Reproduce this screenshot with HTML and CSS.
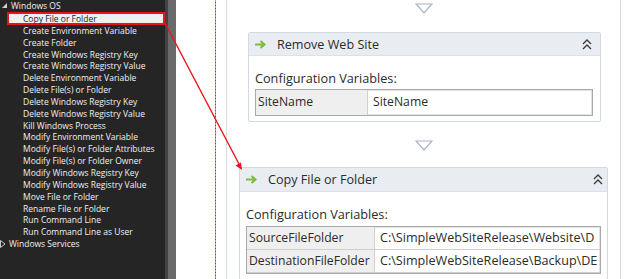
FILE: index.html
```html
<!DOCTYPE html>
<html lang="en">
<head>
  <meta charset="UTF-8">
  <title>Workflow designer</title>
  <link rel="stylesheet" href="styles.css">
</head>
<body>
  <div class="app">
    <aside class="toolbox">
      <div class="group">
        <svg class="twisty" width="6" height="6" viewBox="0 0 6 6"><path d="M5 0 L5 5 L0 5 Z" fill="#d0d0d0"/></svg>
        Windows OS
      </div>
      <ul class="items">
        <li class="selected">Copy File or Folder</li>
        <li>Create Environment Variable</li>
        <li>Create Folder</li>
        <li>Create Windows Registry Key</li>
        <li>Create Windows Registry Value</li>
        <li>Delete Environment Variable</li>
        <li>Delete File(s) or Folder</li>
        <li>Delete Windows Registry Key</li>
        <li>Delete Windows Registry Value</li>
        <li>Kill Windows Process</li>
        <li>Modify Environment Variable</li>
        <li>Modify File(s) or Folder Attributes</li>
        <li>Modify File(s) or Folder Owner</li>
        <li>Modify Windows Registry Key</li>
        <li>Modify Windows Registry Value</li>
        <li>Move File or Folder</li>
        <li>Rename File or Folder</li>
        <li>Run Command Line</li>
        <li>Run Command Line as User</li>
      </ul>
      <div class="group closed">
        <svg class="twisty" width="6" height="8" viewBox="0 0 6 8"><path d="M0.5 0.5 L5 4 L0.5 7.5 Z" fill="none" stroke="#c8c8c8"/></svg>
        Windows Services
      </div>
    </aside>
    <div class="scroll"></div>
    <main class="designer">
      <div class="guide"></div>
      <div class="sequence">
        <div class="drop">
          <svg width="18" height="11" viewBox="0 0 18 11"><path d="M1 1 L17 1 L9 10 Z" fill="none" stroke="#a9b4c2" stroke-width="1.2"/></svg>
        </div>
        <section class="activity first">
          <header class="activity-head">
            <svg class="go" width="11" height="9" viewBox="0 0 11 9"><path d="M0 4.5 H9 M5.5 1 L9.5 4.5 L5.5 8" fill="none" stroke="#7dbb3a" stroke-width="2"/></svg>
            <span class="title">Remove Web Site</span>
            <svg class="fold" width="10" height="11" viewBox="0 0 10 11"><path d="M1 5 L5 1 L9 5 M1 10 L5 6 L9 10" fill="none" stroke="#3a3a3a" stroke-width="1.3"/></svg>
          </header>
          <div class="activity-body">
            <div class="caption">Configuration Variables:</div>
            <div class="vars narrow">
              <div class="key">SiteName</div>
              <div class="val">SiteName</div>
            </div>
          </div>
        </section>
        <div class="drop">
          <svg width="18" height="11" viewBox="0 0 18 11"><path d="M1 1 L17 1 L9 10 Z" fill="none" stroke="#a9b4c2" stroke-width="1.2"/></svg>
        </div>
        <section class="activity second">
          <header class="activity-head">
            <svg class="go" width="11" height="9" viewBox="0 0 11 9"><path d="M0 4.5 H9 M5.5 1 L9.5 4.5 L5.5 8" fill="none" stroke="#7dbb3a" stroke-width="2"/></svg>
            <span class="title">Copy File or Folder</span>
            <svg class="fold" width="10" height="11" viewBox="0 0 10 11"><path d="M1 5 L5 1 L9 5 M1 10 L5 6 L9 10" fill="none" stroke="#3a3a3a" stroke-width="1.3"/></svg>
          </header>
          <div class="activity-body">
            <div class="caption">Configuration Variables:</div>
            <div class="vars wide">
              <div class="key">SourceFileFolder</div>
              <div class="val">C:\SimpleWebSiteRelease\Website\D</div>
              <div class="key">DestinationFileFolder</div>
              <div class="val">C:\SimpleWebSiteRelease\Backup\DE</div>
            </div>
          </div>
        </section>
      </div>
    </main>
  </div>

  <svg class="callout" width="624" height="279" viewBox="0 0 624 279">
    <line x1="165" y1="23" x2="239" y2="164" stroke="#e8141c" stroke-width="1.4"/>
    <path d="M242 170 L241 162.5 L235.5 165.5 Z" fill="#e8141c"/>
  </svg>
</body>
</html>
```

FILE: styles.css
```css
body {
  margin: 0;
  background: #fff;
  font-family: "Open Sans", "Noto Sans", sans-serif;
}
.app {
  display: flex;
  height: 279px;
  overflow: hidden;
}
.toolbox {
  width: 165px;
  background: #252526;
  color: #f0f0f0;
  font-size: 8.5px;
}
.group {
  display: flex;
  align-items: center;
  height: 11.85px;
  line-height: 11.85px;
  padding-left: 2px;
}
.group.closed {
  padding-left: 0;
}
.twisty {
  margin-right: 3px;
}
.items {
  list-style: none;
  margin: 0;
  padding: 0;
}
.items li {
  height: 11.85px;
  line-height: 11.85px;
  padding-left: 23px;
  white-space: nowrap;
}
.items li.selected {
  margin-left: 7px;
  padding-left: 14px;
  background: #efefef;
  color: #222;
  border: 2px solid #e8141c;
  height: 9px;
  line-height: 9px;
}
.scroll {
  width: 8px;
  border-left: 3px solid #434343;
  background: #6a6a6a;
}
.designer {
  flex: 1;
  display: flex;
}
.guide {
  width: 1px;
  margin-left: 39px;
  background: repeating-linear-gradient(to bottom, #d4a42a 0, #d4a42a 2px, #6b5a2a 2px, #6b5a2a 3px);
}
.sequence {
  width: 393px;
  margin-left: 10px;
  border-left: 1px solid #d7dee8;
  border-right: 1px solid #d7dee8;
  padding-top: 3px;
}
.drop {
  display: flex;
  justify-content: center;
  height: 11px;
}
.activity {
  border: 1px solid #d3d9e1;
  border-radius: 2px;
  background: #fff;
}
.activity.first {
  margin: 18px 19px 0 21px;
}
.activity.second {
  margin: 16px 12px 0 12px;
}
.activity.first + .drop {
  margin-top: 18px;
}
.activity-head {
  display: flex;
  align-items: center;
  height: 22px;
  background: #e9edf1;
  border-bottom: 1px solid #dde2e8;
  padding: 0 8px 0 6px;
  color: #2b2b2b;
  font-size: 12.6px;
}
.second .activity-head {
  height: 23px;
  padding-right: 4px;
}
.go {
  margin-right: 11px;
}
.title {
  flex: 1;
}
.activity-body {
  padding: 14px 7px 5px 6px;
  color: #2b2b2b;
}
.second .activity-body {
  padding-right: 6px;
}
.caption {
  font-size: 12.7px;
  line-height: 16px;
  margin-bottom: 3px;
}
.second .caption {
  margin-bottom: 4px;
}
.vars {
  display: grid;
  border: 1px solid #a9a9a9;
  box-shadow: inset 0 0 0 1px #e2e2e2;
  font-size: 12.2px;
  overflow: hidden;
}
.vars.narrow {
  grid-template-columns: 112px 1fr;
  grid-auto-rows: 25px;
}
.vars.wide {
  grid-template-columns: 128px 1fr;
  grid-auto-rows: 23px;
}
.key {
  background: #efefef;
  border-right: 1px solid #d0d0d0;
  border-bottom: 1px solid #cfcfcf;
  padding-left: 2px;
  line-height: 22px;
  white-space: nowrap;
}
.val {
  padding-left: 5px;
  border-bottom: 1px solid #cfcfcf;
  line-height: 22px;
  white-space: nowrap;
  font-size: 12.6px;
}
.narrow .key,
.narrow .val {
  border-bottom: none;
  line-height: 24px;
}
.narrow .val {
  font-size: 12.2px;
}
.callout {
  position: absolute;
  left: 0;
  top: 0;
  pointer-events: none;
}
```
